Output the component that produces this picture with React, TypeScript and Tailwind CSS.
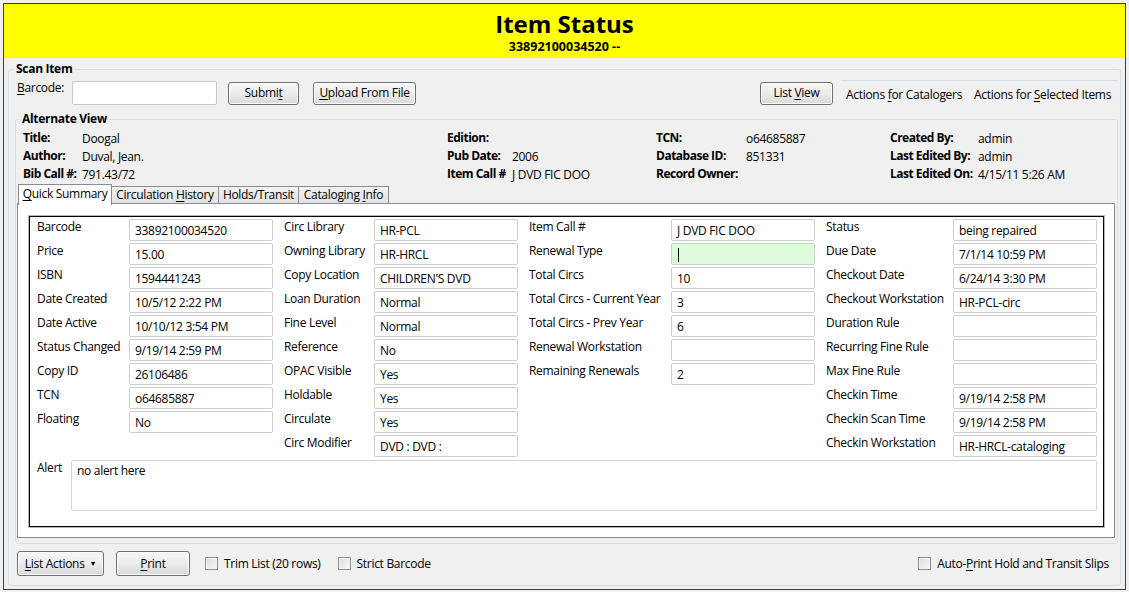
import React from "react";

const Btn = ({ children, w, cls = "" }: { children: React.ReactNode; w: string; cls?: string }) => (
  <div
    className={`${w} ${cls} h-[23px] border border-[#707070] rounded-[3px] bg-linear-to-b from-[#f7f7f7] via-[#ececec] to-[#d9d9d9] flex items-center justify-center shadow-[inset_0_0_0_1px_#fcfcfc]`}
  >
    <span className="whitespace-pre">{children}</span>
  </div>
);

const U = ({ c }: { c: string }) => <span className="underline underline-offset-[2px]">{c}</span>;

const Field = ({ value, green }: { value: string; green?: boolean }) => (
  <div
    className={`w-[144px] h-[22px] border border-[#cfcfcf] rounded-[2px] px-[5px] flex items-center pt-[2px] ${
      green ? "bg-[#dcfcdc]" : "bg-white"
    }`}
  >
    {green ? <span className="w-px h-[14px] bg-black ml-[1px]" /> : <span className="whitespace-nowrap">{value}</span>}
  </div>
);

const Col = ({ rows, lw, gap = true }: { rows: [string, string, boolean?][]; lw: string; gap?: boolean }) => (
  <div className={`flex flex-col gap-[2px] ${gap ? "mr-[11px]" : ""}`}>
    {rows.map(([l, v, g]) => (
      <div key={l} className="flex items-start h-[22px]">
        <div className={`${lw} leading-[16px] whitespace-nowrap`}>{l}</div>
        <Field value={v} green={g} />
      </div>
    ))}
  </div>
);

const Check = ({ label }: { label: React.ReactNode }) => (
  <div className="flex items-center">
    <div className="w-[13px] h-[13px] border border-[#8f8f8f] bg-linear-to-br from-[#dcdcdc] to-[#f8f8f8] shadow-[inset_0_0_0_1px_#f4f4f4] mr-[6px]" />
    <span>{label}</span>
  </div>
);

export default function App() {
  const col1: [string, string][] = [
    ["Barcode", "33892100034520"],
    ["Price", "15.00"],
    ["ISBN", "1594441243"],
    ["Date Created", "10/5/12 2:22 PM"],
    ["Date Active", "10/10/12 3:54 PM"],
    ["Status Changed", "9/19/14 2:59 PM"],
    ["Copy ID", "26106486"],
    ["TCN", "o64685887"],
    ["Floating", "No"],
  ];
  const col2: [string, string][] = [
    ["Circ Library", "HR-PCL"],
    ["Owning Library", "HR-HRCL"],
    ["Copy Location", "CHILDREN'S DVD"],
    ["Loan Duration", "Normal"],
    ["Fine Level", "Normal"],
    ["Reference", "No"],
    ["OPAC Visible", "Yes"],
    ["Holdable", "Yes"],
    ["Circulate", "Yes"],
    ["Circ Modifier", "DVD : DVD :"],
  ];
  const col3: [string, string, boolean?][] = [
    ["Item Call #", "J DVD FIC DOO"],
    ["Renewal Type", "", true],
    ["Total Circs", "10"],
    ["Total Circs - Current Year", "3"],
    ["Total Circs - Prev Year", "6"],
    ["Renewal Workstation", ""],
    ["Remaining Renewals", "2"],
  ];
  const col4: [string, string][] = [
    ["Status", "being repaired"],
    ["Due Date", "7/1/14 10:59 PM"],
    ["Checkout Date", "6/24/14 3:30 PM"],
    ["Checkout Workstation", "HR-PCL-circ"],
    ["Duration Rule", ""],
    ["Recurring Fine Rule", ""],
    ["Max Fine Rule", ""],
    ["Checkin Time", "9/19/14 2:58 PM"],
    ["Checkin Scan Time", "9/19/14 2:58 PM"],
    ["Checkin Workstation", "HR-HRCL-cataloging"],
  ];

  const info = [
    { w: "w-[424px]", lw: "w-[59px]", rows: [["Title:", "Doogal"], ["Author:", "Duval, Jean."], ["Bib Call #:", "791.43/72"]] },
    { w: "w-[209px]", lw: "w-[65px]", rows: [["Edition:", ""], ["Pub Date:", "2006"], ["Item Call #", "J DVD FIC DOO"]] },
    { w: "w-[234px]", lw: "w-[90px]", rows: [["TCN:", "o64685887"], ["Database ID:", "851331"], ["Record Owner:", ""]] },
    { w: "w-[220px]", lw: "w-[88px]", rows: [["Created By:", "admin"], ["Last Edited By:", "admin"], ["Last Edited On:", "4/15/11 5:26 AM"]] },
  ];

  return (
    <div className="w-[1129px] h-[592px] bg-[#f0f0f0] pt-[3px] pl-[3px] pr-[3px] pb-[2px] font-['Open_Sans',sans-serif] text-[12px] tracking-[-0.3px] text-black overflow-hidden">
      <div className="h-full border border-[#404040] flex flex-col">
        <div className="h-[54px] bg-[#ffff00] flex flex-col items-center pt-[5px] shrink-0">
          <div className="text-[24px] leading-[30px] font-bold tracking-[0px]">Item Status</div>
          <div className="text-[12.5px] leading-[16px] font-bold tracking-[0px]">33892100034520 --</div>
        </div>
        <div className="flex-1 pt-[4px] pl-[4px] pr-[4px] pb-[3px] flex flex-col">
          <fieldset className="flex-1 border border-[#d5dfe5] rounded-[3px] pl-[6px] pr-[2px]">
            <legend className="ml-[-1px] px-[2px] font-bold leading-[14px]">Scan Item</legend>
            <div className="flex items-center h-[24px] mt-[5px]">
              <div className="w-[55px] ml-[2px] self-start leading-[16px] -mt-[1px]">
                <U c="B" />arcode:
              </div>
              <div className="w-[145px] h-[24px] border border-[#c5c8cd] rounded-[2px] bg-white" />
              <Btn w="w-[71px]" cls="ml-[11px]">
                Submi<U c="t" />
              </Btn>
              <Btn w="w-[103px]" cls="ml-[14px]">
                <U c="U" />pload From File
              </Btn>
              <div className="flex-1" />
              <Btn w="w-[73px]">
                List <U c="V" />iew
              </Btn>
              <div className="ml-[8px] self-stretch flex items-center border-t border-[#d5dfe5] pl-[5px] pt-[3px] w-[277px] -mt-[1px]">
                <span className="whitespace-pre">
                  Actions <U c="f" />or Catalogers
                </span>
                <span className="ml-[12px] whitespace-pre">
                  Actions for <U c="S" />elected Items
                </span>
              </div>
            </div>
            <fieldset className="mt-[7px] border border-[#d5dfe5] rounded-[3px] pl-[1px] pr-[2px] pb-[5px]">
              <legend className="ml-[3px] px-[2px] font-bold leading-[14px]">Alternate View</legend>
              <div className="flex mt-[3px] pl-[6px] h-[54px]">
                {info.map((c, i) => (
                  <div key={i} className={`${c.w} flex flex-col`}>
                    {c.rows.map(([l, v]) => (
                      <div key={l} className="flex h-[18px] items-center whitespace-nowrap">
                        <div className={`${c.lw} font-bold tracking-[-0.5px]`}>{l}</div>
                        <div className="pt-[1px]">{v}</div>
                      </div>
                    ))}
                  </div>
                ))}
              </div>
              <div className="flex items-end h-[20px] mt-[1px] pl-[1px]">
                <div className="relative z-10 w-[94px] h-[21px] -mb-[1px] bg-white border border-b-0 border-[#898c95] flex items-center justify-center pb-[2px]">
                  <span>
                    <U c="Q" />uick Summary
                  </span>
                </div>
                <div className="w-[107px] h-[18px] bg-linear-to-b from-[#f2f2f2] to-[#e2e2e2] border border-l-0 border-[#898c95] flex items-center justify-center">
                  <span className="whitespace-pre">
                    Circulation <U c="H" />istory
                  </span>
                </div>
                <div className="w-[80px] h-[18px] bg-linear-to-b from-[#f2f2f2] to-[#e2e2e2] border border-l-0 border-[#898c95] flex items-center justify-center">
                  Holds/Transit
                </div>
                <div className="w-[90px] h-[18px] bg-linear-to-b from-[#f2f2f2] to-[#e2e2e2] border border-l-0 border-[#898c95] flex items-center justify-center">
                  <span className="whitespace-pre">
                    Cataloging <U c="I" />nfo
                  </span>
                </div>
              </div>
              <div className="-mt-[1px] h-[335px] bg-white border border-[#898c95] pt-[12px] pl-[11px]">
                <div className="w-[1075px] h-[311px] border border-black shadow-[0_0_0_1px_#b8b8b8] pt-[2px] pl-[7px]">
                  <div className="flex h-[240px]">
                    <Col rows={col1} lw="w-[92px]" />
                    <Col rows={col2} lw="w-[90px]" />
                    <Col rows={col3} lw="w-[142px]" />
                    <Col rows={col4} lw="w-[127px]" gap={false} />
                  </div>
                  <div className="flex mt-[1px]">
                    <div className="w-[34px] leading-[16px]">Alert</div>
                    <div className="w-[1026px] h-[51px] border border-[#d5d5d5] rounded-[2px] px-[5px] pt-[2px] leading-[16px]">
                      no alert here
                    </div>
                  </div>
                </div>
              </div>
            </fieldset>
            <div className="flex items-center mt-[7px] ml-[2px]">
              <Btn w="w-[87px]" cls="h-[25px]">
                <U c="L" />ist Actions
                <span className="ml-[5px] text-[7px] align-middle">▼</span>
              </Btn>
              <Btn w="w-[74px]" cls="ml-[12px] h-[25px]">
                <U c="P" />rint
              </Btn>
              <div className="ml-[15px]">
                <Check label="Trim List (20 rows)" />
              </div>
              <div className="ml-[17px]">
                <Check label="Strict Barcode" />
              </div>
              <div className="flex-1" />
              <div className="mr-[9px]">
                <Check
                  label={
                    <>
                      Auto-<U c="P" />rint Hold and Transit Slips
                    </>
                  }
                />
              </div>
            </div>
          </fieldset>
        </div>
      </div>
    </div>
  );
}
